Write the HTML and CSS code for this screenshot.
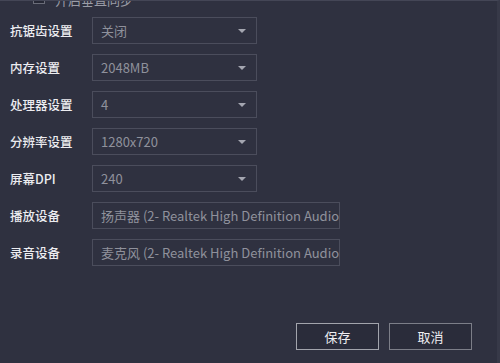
FILE: index.html
```html
<!DOCTYPE html>
<html lang="zh-CN">
<head>
    <meta charset="UTF-8">
    <meta name="viewport" content="width=device-width, initial-scale=1.0">
    <title>高级设置</title>
    <link rel="stylesheet" href="styles.css">
</head>
<body>
    <div class="dialog">
        <!-- cut-off option at the top -->
        <div class="top-option">
            <span class="checkbox"></span>
            <span class="top-label">开启垂直同步</span>
        </div>

        <div class="form">
            <div class="row">
                <label>抗锯齿设置</label>
                <div class="select"><span>关闭</span><i class="arrow"></i></div>
            </div>
            <div class="row">
                <label>内存设置</label>
                <div class="select"><span>2048MB</span><i class="arrow"></i></div>
            </div>
            <div class="row">
                <label>处理器设置</label>
                <div class="select"><span>4</span><i class="arrow"></i></div>
            </div>
            <div class="row">
                <label>分辨率设置</label>
                <div class="select"><span>1280x720</span><i class="arrow"></i></div>
            </div>
            <div class="row">
                <label>屏幕DPI</label>
                <div class="select"><span>240</span><i class="arrow"></i></div>
            </div>
            <div class="row">
                <label>播放设备</label>
                <div class="text-field"><span>扬声器 (2- Realtek High Definition Audio)</span></div>
            </div>
            <div class="row">
                <label>录音设备</label>
                <div class="text-field"><span>麦克风 (2- Realtek High Definition Audio)</span></div>
            </div>
        </div>

        <!-- Buttons -->
        <div class="actions">
            <button class="btn btn-save">保存</button>
            <button class="btn">取消</button>
        </div>
    </div>
</body>
</html>
```

FILE: styles.css
```css
/* Dark settings dialog */
html, body {
    margin: 0;
    padding: 0;
}

body {
    font-family: "Noto Sans CJK SC", "Noto Sans", sans-serif;
    background-color: #2f3140;
    overflow: hidden;
}

.dialog {
    width: 497px;
    height: 362px;
    border-top: 1px solid #444656;
    border-right: 3px solid #373948;
    display: flex;
    flex-direction: column;
    overflow: hidden;
}

/* only the bottom edge of this option is visible */
.top-option {
    display: flex;
    align-items: flex-end;
    height: 3px;
    padding-left: 33px;
    gap: 10px;
}

.checkbox {
    flex-shrink: 0;
    width: 10px;
    height: 10px;
    border: 1px solid #6a6c78;
    background-color: #262835;
}

.top-label {
    font-size: 13px;
    line-height: 13px;
    color: #9a9ca6;
    margin-bottom: -2px;
    white-space: nowrap;
}

.form {
    display: flex;
    flex-direction: column;
    gap: 10px;
    margin-top: 13px;
    padding-left: 10px;
}

.row {
    display: flex;
    align-items: center;
    height: 27px;
}

.row label {
    width: 82px;
    font-size: 12.5px;
    font-weight: 500;
    color: #ececf0;
}

.select, .text-field {
    box-sizing: border-box;
    height: 27px;
    border: 1px solid #4b4d5c;
    display: flex;
    align-items: center;
    padding-left: 8px;
    font-size: 13px;
    color: #8f919c;
    overflow: hidden;
    white-space: nowrap;
}

.select {
    width: 165px;
    justify-content: space-between;
    padding-right: 10px;
}

.text-field {
    width: 248px;
}

.arrow {
    width: 0;
    height: 0;
    border-left: 4px solid transparent;
    border-right: 4px solid transparent;
    border-top: 4px solid #a4a6b0;
}

.actions {
    margin-top: auto;
    display: flex;
    justify-content: flex-end;
    gap: 10px;
    padding-right: 25px;
    padding-bottom: 13px;
}

.btn {
    box-sizing: border-box;
    width: 83px;
    height: 27px;
    background-color: #2a2c3a;
    border: 1px solid #7c7e88;
    color: #eeeef2;
    font-family: inherit;
    font-size: 13px;
    cursor: pointer;
}

.btn-save {
    border-color: #a2a4ac;
}
```
